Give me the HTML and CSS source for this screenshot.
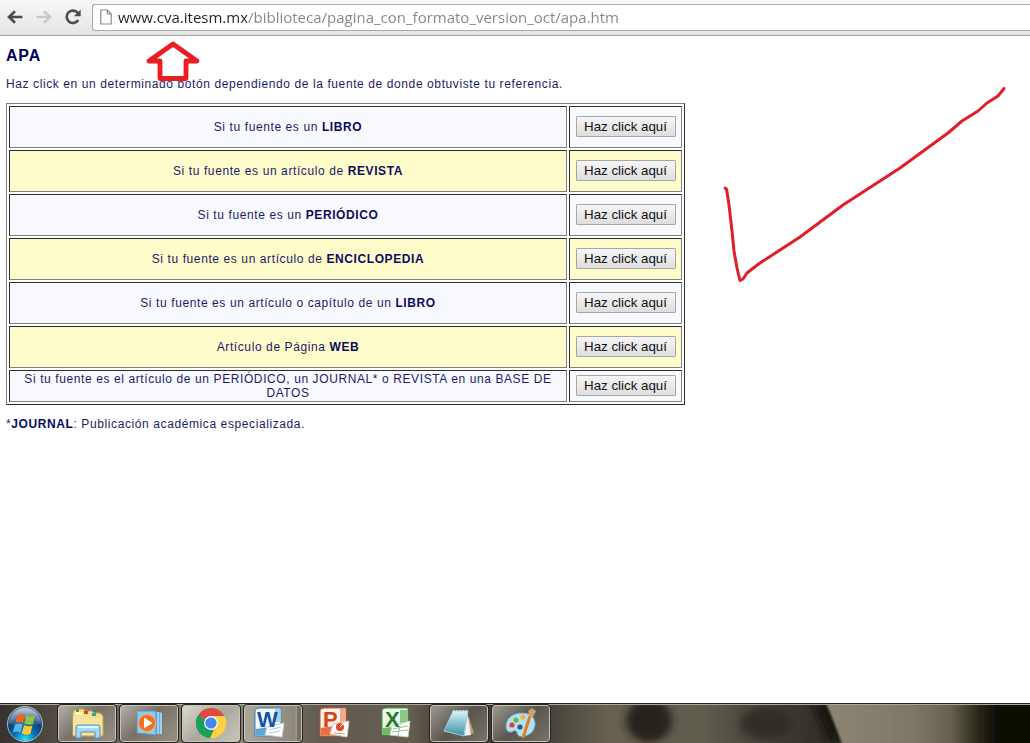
FILE: index.html
```html
<!DOCTYPE html>
<html lang="es">
<head>
<meta charset="utf-8">
<title>APA</title>
<link rel="stylesheet" href="styles.css">
</head>
<body>
<header class="toolbar">
  <button class="nav" aria-label="Atrás"><svg width="18" height="18" viewBox="0 0 18 18"><path d="M16.500 9H3M9 3.200L3 9l6 5.800" fill="none" stroke="#4c4c4c" stroke-width="2.600"/></svg></button>
  <button class="nav" aria-label="Adelante" disabled><svg width="18" height="18" viewBox="0 0 18 18"><path d="M1.500 9H15M9 3.200L15 9l-6 5.800" fill="none" stroke="#c9c9c9" stroke-width="2.600"/></svg></button>
  <button class="nav" aria-label="Recargar"><svg width="18" height="18" viewBox="0 0 18 18"><path d="M14.200 12A6.200 6.200 0 1 1 13.800 5" fill="none" stroke="#4c4c4c" stroke-width="2.600"/><path d="M16.700 1.500V8.300H9.900z" fill="#4c4c4c"/></svg></button>
  <div class="omnibox">
    <svg width="12" height="16" viewBox="0 0 12 16"><path d="M.800 1H7.500L11.200 4.800V15H.800zM7.300 1V5H11.200" fill="#fff" stroke="#8a8a8a" stroke-width="1.200"/></svg>
    <input class="address" type="text" aria-label="Dirección" value="www.cva.itesm.mx/biblioteca/pagina_con_formato_version_oct/apa.htm">
  </div>
</header>

<main class="page">
  <h1 class="title">APA</h1>
  <p class="intro">Haz click en un determinado botón dependiendo de la fuente de donde obtuviste tu referencia.</p>
  <table class="sources">
    <tr><td class="source" id="s1">Si tu fuente es un <b>LIBRO</b></td><td><button class="go" aria-describedby="s1">Haz click aquí</button></td></tr>
    <tr class="alt"><td class="source" id="s2">Si tu fuente es un artículo de <b>REVISTA</b></td><td><button class="go" aria-describedby="s2">Haz click aquí</button></td></tr>
    <tr><td class="source" id="s3">Si tu fuente es un <b>PERIÓDICO</b></td><td><button class="go" aria-describedby="s3">Haz click aquí</button></td></tr>
    <tr class="alt"><td class="source" id="s4">Si tu fuente es un artículo de <b>ENCICLOPEDIA</b></td><td><button class="go" aria-describedby="s4">Haz click aquí</button></td></tr>
    <tr><td class="source" id="s5">Si tu fuente es un artículo o capítulo de un <b>LIBRO</b></td><td><button class="go" aria-describedby="s5">Haz click aquí</button></td></tr>
    <tr class="alt"><td class="source" id="s6">Artículo de Página <b>WEB</b></td><td><button class="go" aria-describedby="s6">Haz click aquí</button></td></tr>
    <tr class="short"><td class="source" id="s7">Si tu fuente es el artículo de un PERIÓDICO, un JOURNAL* o REVISTA en una BASE DE DATOS</td><td><button class="go" aria-describedby="s7">Haz click aquí</button></td></tr>
  </table>
  <p class="note">*<b>JOURNAL</b>: Publicación académica especializada.</p>
</main>

<svg class="mark mark-arrow" width="54" height="42" viewBox="0 0 54 42"><path d="M27 3L3 20H14V37.500H40V20H51z" fill="none" stroke="#ea1c24" stroke-width="4.800" stroke-linejoin="round"/></svg>
<svg class="mark mark-check" width="290" height="204" viewBox="0 0 290 204"><path d="M5 104L6.500 105 9 121 12 147 14 167 17 184 20 196.500 23 195 27 189 32 185 40 179 80 153 123 121 180 84 228 49 242 37 258 27 267 19 278 12 284 4.500" fill="none" stroke="#e01f2b" stroke-width="3" stroke-linejoin="round" stroke-linecap="round"/></svg>

<footer class="taskbar">
  <svg class="wallpaper" viewBox="0 0 1030 40" preserveAspectRatio="none" aria-hidden="true">
    <defs>
      <linearGradient id="wall"><stop offset="0" stop-color="#37322d"/><stop offset=".1" stop-color="#686057"/><stop offset=".23" stop-color="#8c8677"/><stop offset=".31" stop-color="#625b51"/><stop offset=".4" stop-color="#655d50"/><stop offset=".44" stop-color="#39342d"/><stop offset=".53" stop-color="#444139"/><stop offset=".59" stop-color="#666151"/><stop offset=".68" stop-color="#605c4e"/><stop offset=".74" stop-color="#474339"/><stop offset=".8" stop-color="#302c26"/><stop offset="1" stop-color="#302c26"/></linearGradient>
      <linearGradient id="light"><stop offset="0" stop-color="#8d8675"/><stop offset=".4" stop-color="#7e7767"/><stop offset=".57" stop-color="#686250"/><stop offset=".7" stop-color="#292619"/><stop offset=".8" stop-color="#0a0a06"/><stop offset="1" stop-color="#060604"/></linearGradient>
      <filter id="soft" x="-30%" y="-30%" width="160%" height="160%"><feGaussianBlur stdDeviation="4"/></filter>
      <filter id="edge"><feGaussianBlur stdDeviation="1"/></filter>
    </defs>
    <path d="M0 0H1030V40H0z" fill="url(#wall)"/>
    <ellipse cx="649" cy="17" rx="23" ry="22" fill="#28241b" filter="url(#soft)"/>
    <ellipse cx="767" cy="20" rx="27" ry="17" fill="#332f28" filter="url(#soft)"/>
    <path d="M814 0H840V40H830z" fill="#15130e" filter="url(#soft)"/>
    <path d="M824 -5H1045V48H845C838 30 833 15 824 -5z" fill="url(#light)" filter="url(#edge)"/>
  </svg>
  <button class="start" aria-label="Inicio">
    <svg width="38" height="38" viewBox="0 0 38 38">
      <defs><radialGradient id="orb" cx=".5" cy=".95" r=".95"><stop offset="0" stop-color="#2ce4fa"/><stop offset=".3" stop-color="#087bbc"/><stop offset=".62" stop-color="#0b3c72"/><stop offset="1" stop-color="#758da3"/></radialGradient><linearGradient id="gloss" x2="0" y2="1"><stop stop-color="#fff" stop-opacity=".6"/><stop offset="1" stop-color="#cbe6f5" stop-opacity=".1"/></linearGradient></defs>
      <circle cx="19" cy="19" r="17.500" fill="url(#orb)" stroke="#a4bccb"/>
      <path d="M3 19A16 16 0 0 1 35 19Q19 23 3 19z" fill="url(#gloss)"/>
      <path d="M11.500 10.500Q15 7.500 19 9.800L17 18Q13 16 9.300 18z" fill="#f26522"/>
      <path d="M20.300 10.300Q24 12.500 29 10.500L27 19Q22 20.500 18.300 18.500z" fill="#8cc63f"/>
      <path d="M9 19.500Q13 17.300 16.600 19.500L14.500 27.500Q11 25.500 7 27.500z" fill="#55b7ed"/>
      <path d="M18 20Q22 22.200 26.500 20.500L24.300 29Q20 30.700 15.800 28.200z" fill="#ffc72c"/>
    </svg>
  </button>
  <button class="task" aria-label="Explorador de Windows">
    <svg width="34" height="32" viewBox="0 0 34 32"><path d="M3 5L6 2H13L15 4H22L24 6H30L33 9V29H3z" fill="#f7dd86" stroke="#caa64e"/><path d="M5 5H12V8H5z" fill="#fff5c8"/><path d="M6 2H9V5H6z" fill="#47a832"/><path d="M14 4H18V7H14z" fill="#b05b2c"/><path d="M22 6H26V9H22z" fill="#30a3bc"/><path d="M3 9H17L19 11H32V28H3z" fill="#f8e49e"/><path d="M6 31V20Q6 18 9 18H27Q30 18 30 20V31H25V25H11V31z" fill="#a5d9f1" stroke="#4697c4"/><path d="M8 20H28" stroke="#e5f8ff" stroke-width="2"/></svg>
  </button>
  <button class="task" aria-label="Reproductor de Windows Media">
    <svg width="34" height="32" viewBox="0 0 34 32"><path d="M22 5H30V27H22z" fill="#6baeda"/><path d="M26 5V27M29 6V27" stroke="#d4f1ff"/><path d="M5 4H24V28L5 26z" fill="#91c9e9" stroke="#5296c5"/><circle cx="15" cy="16" r="8.500" fill="#ed721f" stroke="#f8b06b"/><path d="M12 10.500L20.500 16 12 21.500z" fill="#fff"/></svg>
  </button>
  <button class="task active" aria-label="Google Chrome">
    <svg width="32" height="32" viewBox="0 0 32 32"><path d="M16 16L3.200 8.200A15 15 0 0 1 29.200 8.800z" fill="#dd4b3e"/><path d="M16 16L29.200 8.800A15 15 0 0 1 15 31z" fill="#ffd043"/><path d="M16 16L15 31A15 15 0 0 1 3.200 8.200z" fill="#1a9f5c"/><path d="M16 9H29.200A15 15 0 0 1 15 31L22 20z" fill="#ffd043"/><path d="M3.200 8.200L10 20Q13 23 19 22.500L15 31A15 15 0 0 1 3.200 8.200z" fill="#1a9f5c"/><circle cx="16" cy="16" r="7" fill="#f5f5f5"/><circle cx="16" cy="16" r="5.600" fill="#4285f4"/></svg>
  </button>
  <button class="task stacked" aria-label="Microsoft Word">
    <svg width="32" height="32" viewBox="0 0 32 32"><path d="M2 4Q2 1 6 1H28V29H2z" fill="#eff6fc" stroke="#3b83b8"/><path d="M22 2H27.500V15H22z" fill="#a8cee9"/><path d="M2.500 22L23 19V28.500H2.500z" fill="#5fa4d3"/><path d="M14 20L31 16 29 30 12 28z" fill="#fff" stroke="#bbd1df"/><path d="M16 23L28 20M16 26L27 24" stroke="#b9cad6"/><text class="letter" x="4" y="20" fill="#1254a3">W</text></svg>
  </button>
  <button class="task pinned" aria-label="Microsoft PowerPoint">
    <svg width="32" height="32" viewBox="0 0 32 32"><path d="M2 4Q2 1 6 1H28V29H2z" fill="#fff3ec" stroke="#dc4c26"/><path d="M22 2H27.500V15H22z" fill="#f1aa8e"/><path d="M2.500 21L23 18V28.500H2.500z" fill="#e6703f"/><path d="M15 17L31 14 29 30 12 27z" fill="#fff" stroke="#e0c1b3"/><circle cx="22" cy="20" r="4" fill="#db4b2a"/><path d="M22 20L25 17" stroke="#fff"/><path d="M16 26L27 27" stroke="#d99a7e"/><text class="letter" x="5" y="20" fill="#d34515">P</text></svg>
  </button>
  <button class="task pinned" aria-label="Microsoft Excel">
    <svg width="32" height="32" viewBox="0 0 32 32"><path d="M2 4Q2 1 6 1H28V28H2z" fill="#ecf8e7" stroke="#3b9d48"/><path d="M20 3H27.500V16H20z" fill="#8cc987"/><path d="M2.500 21L23 19V27.500H2.500z" fill="#70b967"/><path d="M12 19L30 14 28 30 10 28z" fill="#fff" stroke="#bedabb"/><path d="M13 22L28 19M12 25L28 23M20 19L18 29" stroke="#a4bca2"/><text class="letter" x="5" y="20" fill="#227c32">X</text></svg>
  </button>
  <button class="task dark" aria-label="Bloc de notas">
    <svg width="34" height="32" viewBox="0 0 34 32"><defs><linearGradient id="pad" x2="0" y2="1"><stop stop-color="#d6f5f8"/><stop offset="1" stop-color="#388fa9"/></linearGradient></defs><path d="M25 5L32 26 26 28z" fill="#bc9e72"/><path d="M25 4L29 28 21 29z" fill="#edf3f3"/><path d="M11 4H26L22 29 2 24z" fill="url(#pad)" stroke="#a6cbd3"/><path d="M12 3V5M15 3V5M18 3V5M21 3V5M24 3V5" stroke="#eee"/></svg>
  </button>
  <button class="task dark" aria-label="Paint">
    <svg width="34" height="32" viewBox="0 0 34 32"><path d="M2 21C1 12 8 6 18 6S32 12 31 19Q29 28 20 29Q14 31 13 26Q12 22 8 25Q3 26 2 21z" fill="#b7dff4" stroke="#659fc4"/><circle cx="8" cy="18" r="2.600" fill="#d94334"/><circle cx="12" cy="13" r="2.600" fill="#62bb43"/><circle cx="19" cy="10" r="2.600" fill="#f2b536"/><circle cx="16" cy="20" r="2.600" fill="#35576f"/><path d="M26 9L19 31" stroke="#df7f25" stroke-width="3"/><path d="M26 10L24 4 28 1 32 4 29 10z" fill="#cda06c"/></svg>
  </button>
</footer>
</body>
</html>
```
FILE: styles.css
```css
* { box-sizing: border-box; }

body {
  margin: 0;
  min-height: 100vh;
  display: flex;
  flex-direction: column;
  position: relative;
  background: #fff;
  font-family: "Liberation Sans", Arial, sans-serif;
  overflow-x: hidden;
}

button { font-family: inherit; }

.toolbar {
  display: flex;
  align-items: center;
  height: 36px;
  padding: 0 0 1px 4px;
  border-bottom: 1px solid #a5a5a5;
  background: linear-gradient(#f8f8f8, #e4e4e4);
}

.nav {
  display: flex;
  justify-content: center;
  width: 29px;
  padding: 0;
  padding-right: 8px;
  border: 0;
  background: none;
}

.omnibox {
  flex: 1;
  display: flex;
  align-items: center;
  gap: 6px;
  height: 27px;
  margin-left: 1px;
  padding-left: 7px;
  border: 1px solid #ababab;
  border-right: 0;
  border-radius: 3px 0 0 3px;
  background: #fff;
}

.address {
  flex: 1;
  min-width: 0;
  padding: 0;
  border: 0;
  outline: 0;
  font: 15px/22px "Open Sans", "Noto Sans", sans-serif;
  color: transparent;
  background: linear-gradient(to right, #222 129px, #858585 129px);
  background-clip: text;
}

.page {
  flex: 1;
  padding: 10px 6px;
  color: #1c1c66;
  font-size: 12px;
  line-height: 14px;
  letter-spacing: .05em;
}

.title {
  margin: 0 0 12px;
  color: #000058;
  font-size: 16px;
  line-height: 19px;
  letter-spacing: .05em;
}

.intro { margin: 0 0 12px; }
.note { margin: 12px 0 0; }
b { color: #0c0c5c; }

.sources {
  width: 679px;
  max-width: 100%;
  border: 1px solid;
  border-color: #808080 #2d2d2d #2d2d2d #808080;
  border-spacing: 2px;
}

.sources td {
  height: 42px;
  padding: 1px;
  border: 1px solid;
  border-color: #2d2d2d #808080 #808080 #2d2d2d;
  background: #f8f9ff;
  text-align: center;
}

.sources .alt td { background: #fffccc; }
.sources .short td { height: 32px; padding: 0 1px; }
.sources td:last-child { width: 113px; }
.sources .source { padding: 0 12px; }

.go {
  display: block;
  width: 100px;
  height: 21px;
  margin: 0 auto 1px;
  padding: 0;
  border: 1px solid #a6a6a6;
  border-radius: 1px;
  background: linear-gradient(#f6f6f6, #dedede);
  color: #111;
  line-height: 17px;
}

.mark { position: absolute; pointer-events: none; }
.mark-arrow { left: 146px; top: 41px; }
.mark-check { left: 720px; top: 84px; }

.taskbar {
  display: flex;
  align-items: stretch;
  gap: 4px;
  height: 40px;
  padding: 1px 0 1px 6px;
  position: relative;
  border-top: 1px solid #24231f;
  box-shadow: inset 0 1px #aaa79c;
}

.wallpaper {
  position: absolute;
  inset: 0;
  width: 100%;
  height: 100%;
  z-index: -1;
}

.start {
  width: 48px;
  padding: 0;
  border: 0;
  background: none;
  text-align: left;
}

.task {
  display: flex;
  align-items: center;
  justify-content: center;
  width: 58px;
  padding: 0 0 2px;
  border: 1px solid #c7c3b9;
  border-radius: 3px;
  outline: 1px solid #25231f;
  background: linear-gradient(135deg, #b5b0a7, #777168 45%, #969084);
}

.active { background: linear-gradient(135deg, #ddd9cf, #aaa79c 50%, #c8c5b8); }

.stacked {
  background: linear-gradient(90deg, #aaa79a, #8c8779 90%, #c4c0b5 91%, #747064 93%);
  padding-right: 8px;
}

.pinned {
  border-color: transparent;
  outline: 0;
  background: none;
  padding-right: 2px;
}

.dark { background: linear-gradient(135deg, #9c9992, #59554c 50%, #77736b); }

.letter { font: bold 22px "Liberation Sans", Arial, sans-serif; }
```
